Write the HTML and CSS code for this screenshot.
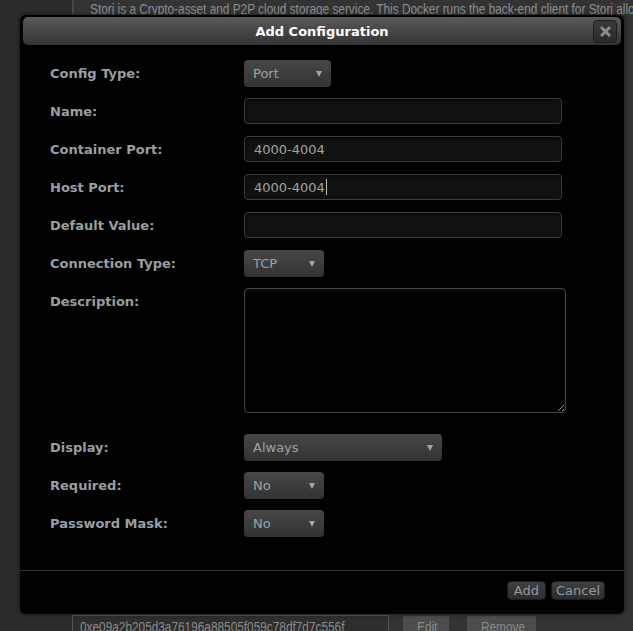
FILE: index.html
```html
<!DOCTYPE html>
<html lang="en">

<head>
    <meta charset="UTF-8">
    <title>Add Configuration</title>
    <link rel="stylesheet" href="styles.css">
</head>

<body>
    <div class="page">
        <div class="gutter"></div>
        <div class="content">
            <div class="desc"><span class="narrow">Storj is a Crypto-asset and P2P cloud storage service. This Docker runs the back-end client for Storj allowing you to share your storage</span></div>
            <div class="var-row">
                <div class="var-value"><span class="narrow">0xe09a2b205d3a76196a88505f059c78df7d7c556f</span></div>
                <div class="var-btn edit"><span class="narrow">Edit</span></div>
                <div class="var-btn remove"><span class="narrow">Remove</span></div>
            </div>
        </div>
    </div>

    <div class="dialog">
        <div class="titlebar">
            Add Configuration
            <button class="close">
                <svg width="11" height="11" viewBox="0 0 11 11">
                    <path d="M2 2 L9 9 M9 2 L2 9" stroke="#8a8a8a" stroke-width="3" stroke-linecap="square"/>
                </svg>
            </button>
        </div>

        <div class="form">
            <div class="row">
                <label>Config Type:</label>
                <div class="select-wrap w-port"><select><option>Port</option></select></div>
            </div>
            <div class="row">
                <label>Name:</label>
                <input class="text" type="text">
            </div>
            <div class="row">
                <label>Container Port:</label>
                <input class="text" type="text" value="4000-4004">
            </div>
            <div class="row">
                <label>Host Port:</label>
                <div class="caret-wrap">
                    <input class="text" type="text" value="4000-4004">
                    <span class="caret"></span>
                </div>
            </div>
            <div class="row">
                <label>Default Value:</label>
                <input class="text" type="text">
            </div>
            <div class="row">
                <label>Connection Type:</label>
                <div class="select-wrap w-small"><select><option>TCP</option></select></div>
            </div>
            <div class="row row-desc">
                <label>Description:</label>
                <textarea></textarea>
            </div>
            <div class="row">
                <label>Display:</label>
                <div class="select-wrap w-wide"><select><option>Always</option></select></div>
            </div>
            <div class="row">
                <label>Required:</label>
                <div class="select-wrap w-small"><select><option>No</option></select></div>
            </div>
            <div class="row">
                <label>Password Mask:</label>
                <div class="select-wrap w-small"><select><option>No</option></select></div>
            </div>
        </div>

        <div class="footer">
            <button class="btn btn-add">Add</button>
            <button class="btn">Cancel</button>
        </div>
    </div>
</body>

</html>
```

FILE: styles.css
```css
html,
body {
    margin: 0;
    height: 100%;
    overflow: hidden;
    background-color: #2b2b2b;
}

.page {
    display: flex;
    height: 100%;
    font-family: 'Liberation Sans', Arial, sans-serif;
}

.gutter {
    width: 72px;
    flex-shrink: 0;
    background-color: #2b2b2b;
}

.content {
    flex: 1;
    min-width: 0;
    background-color: #333333;
    display: flex;
    flex-direction: column;
}

/* the page font is a narrow face, squeeze the regular one */
.narrow {
    display: inline-block;
    transform: scaleX(0.845);
    transform-origin: left center;
    white-space: nowrap;
}

.desc {
    flex-shrink: 0;
    height: 20px;
    padding-left: 16px;
    border-left: 2px solid #474747;
    color: #8c8e92;
    font-size: 14px;
    line-height: 19px;
    white-space: nowrap;
    overflow: hidden;
}

.var-row {
    flex-shrink: 0;
    display: flex;
    margin-top: 595px;
}

.var-value {
    width: 317px;
    height: 24px;
    box-sizing: border-box;
    padding: 0 7px;
    background-color: #2e2e2e;
    border: 1px solid #555;
    color: #8a8a8a;
    font-size: 14px;
    line-height: 22px;
    overflow: hidden;
}

.var-btn {
    height: 22px;
    margin-top: 1px;
    box-sizing: border-box;
    padding-left: 14px;
    background-color: #4d4d4d;
    color: #8a8a8a;
    font-size: 14px;
    line-height: 22px;
}

.edit {
    width: 46px;
    margin-left: 14px;
}

.remove {
    width: 69px;
    margin-left: 18px;
}

/* modal */

.dialog {
    position: absolute;
    left: 20px;
    top: 15px;
    width: 604px;
    height: 599px;
    background-color: #000;
    border-radius: 6px;
    box-shadow: 0 0 4px rgba(0, 0, 0, 0.6);
    font-family: 'DejaVu Sans', sans-serif;
}

.titlebar {
    position: relative;
    margin: 2px 3px 0 3px;
    height: 28px;
    line-height: 30px;
    border-radius: 5px;
    background: linear-gradient(#5a5a5a, #333333);
    color: #fff;
    text-align: center;
    font-weight: bold;
    font-size: 13px;
}

.close {
    position: absolute;
    right: 4px;
    top: 3px;
    width: 24px;
    height: 23px;
    padding: 0;
    border: 1px solid #1e1e1e;
    border-radius: 4px;
    background: linear-gradient(#3a3a3a, #2a2a2a);
    display: flex;
    align-items: center;
    justify-content: center;
}

.form {
    padding: 15px 0 0 30px;
    height: 510px;
}

.row {
    display: flex;
    height: 38px;
}

.row label {
    width: 194px;
    flex-shrink: 0;
    padding-top: 1px;
    line-height: 26px;
    color: #9a9ea3;
    font-weight: bold;
    font-size: 13px;
}

.row-desc {
    height: 146px;
}

.text {
    width: 318px;
    height: 26px;
    box-sizing: border-box;
    padding: 0 9px;
    background-color: #111;
    border: 1px solid #3c3c3c;
    border-radius: 4px;
    box-shadow: inset 0 1px 3px rgba(0, 0, 0, 0.8);
    color: #a3a3a3;
    font-family: 'DejaVu Sans', sans-serif;
    font-size: 13px;
    outline: none;
}

.caret-wrap {
    position: relative;
    height: 26px;
}

.caret {
    position: absolute;
    left: 82px;
    top: 5px;
    width: 1px;
    height: 16px;
    background-color: #bbb;
}

textarea {
    width: 322px;
    height: 125px;
    box-sizing: border-box;
    background-color: #000;
    border: 1px solid #444;
    border-radius: 4px;
    box-shadow: inset 0 1px 3px rgba(255, 255, 255, 0.08);
    color: #a3a3a3;
    outline: none;
}

.select-wrap {
    position: relative;
    height: 27px;
}

.select-wrap select {
    -webkit-appearance: none;
    appearance: none;
    width: 100%;
    height: 27px;
    padding: 0 0 0 9px;
    border: none;
    border-radius: 4px;
    background: linear-gradient(#474747, #333333);
    box-shadow: 0 1px 1px rgba(0, 0, 0, 0.8);
    color: #9aa2a8;
    font-family: 'DejaVu Sans', sans-serif;
    font-size: 13px;
    outline: none;
}

.select-wrap::after {
    content: "";
    position: absolute;
    right: 9px;
    top: 11px;
    border-left: 3px solid transparent;
    border-right: 3px solid transparent;
    border-top: 6px solid #a5a5a5;
    pointer-events: none;
}

.w-port {
    width: 87px;
}

.w-small {
    width: 80px;
}

.w-wide {
    width: 198px;
}

.footer {
    border-top: 1px solid #333;
    padding: 10px 19px 0 0;
    display: flex;
    justify-content: flex-end;
    gap: 5px;
}

.btn {
    height: 19px;
    padding: 0 4px;
    border: 1px solid #1c1c1c;
    border-radius: 4px;
    background: linear-gradient(#3f3f3f, #2c2c2c);
    color: #8f9aa0;
    font-family: 'DejaVu Sans', sans-serif;
    font-size: 13px;
    line-height: 17px;
}

.btn-add {
    min-width: 39px;
}
```
